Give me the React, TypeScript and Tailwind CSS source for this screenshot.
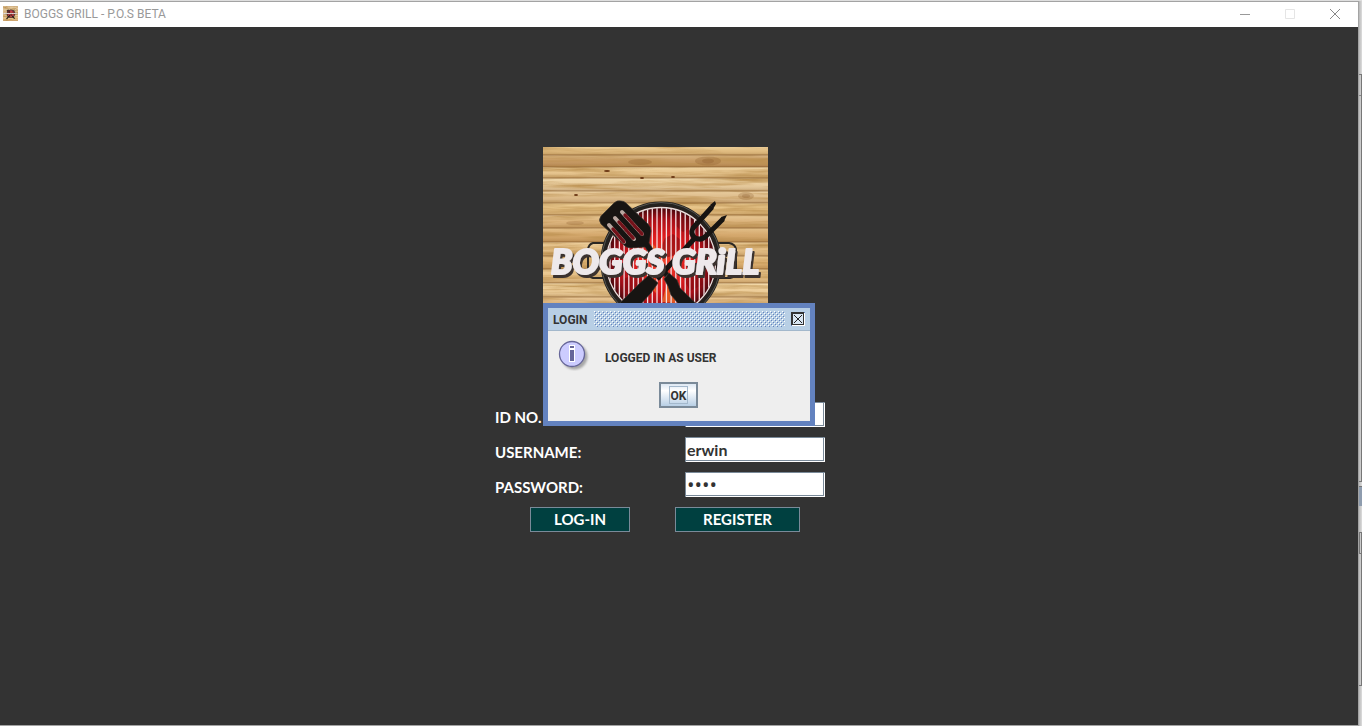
import React, { useState } from "react";

const planks = [
  { y: 0, h: 8, c: "#ddb678" },
  { y: 8, h: 12, c: "#c09058" },
  { y: 20, h: 11, c: "#e4c088" },
  { y: 31, h: 13, c: "#e6c99b" },
  { y: 44, h: 12, c: "#dab684" },
  { y: 56, h: 12, c: "#e2bb7c" },
  { y: 68, h: 13, c: "#d8ad74" },
  { y: 81, h: 14, c: "#d0a062" },
  { y: 95, h: 14, c: "#e2ba80" },
  { y: 109, h: 13, c: "#d8a866" },
  { y: 122, h: 14, c: "#e4bc80" },
  { y: 136, h: 14, c: "#eccb96" },
  { y: 150, h: 14, c: "#d8ab74" },
  { y: 164, h: 61, c: "#e0b67c" },
];

const bars = Array.from({ length: 23 }, (_, i) => 67 + i * 4.7);

function Logo({ id, className }: { id: string; className: string }) {
  return (
    <svg viewBox="0 0 225 225" className={className} role="img" aria-label="Boggs Grill logo">
      <defs>
        <linearGradient id={id + "plank"} x1="0" y1="0" x2="0" y2="1">
          <stop offset="0" stopColor="#fff0c8" stopOpacity=".4" />
          <stop offset=".5" stopColor="#fff0c8" stopOpacity=".1" />
          <stop offset="1" stopColor="#6b3f14" stopOpacity=".25" />
        </linearGradient>
        <radialGradient id={id + "fire"}>
          <stop offset="0" stopColor="#f0452c" />
          <stop offset=".5" stopColor="#dd1a1c" />
          <stop offset=".8" stopColor="#a80f18" />
          <stop offset="1" stopColor="#4c080e" />
        </radialGradient>
        <filter id={id + "grain"} x="0" y="0" width="100%" height="100%">
          <feTurbulence type="fractalNoise" baseFrequency="0.012 0.2" numOctaves="4" seed="21" />
          <feColorMatrix values="0 0 0 0 .5  0 0 0 0 .28  0 0 0 0 .08  2.2 0 0 0 -.9" />
        </filter>
        <filter id={id + "drop"} x="-5%" y="-20%" width="112%" height="150%">
          <feDropShadow dx="2" dy="3" stdDeviation="0.4" floodColor="#3b302d" />
        </filter>
        <clipPath id={id + "bowl"}>
          <circle cx="118" cy="115" r="54" />
        </clipPath>
      </defs>
      {planks.map((p) => (
        <g key={p.y}>
          <rect x="0" y={p.y} width="225" height={p.h} fill={p.c} />
          <rect x="0" y={p.y} width="225" height={p.h} fill={`url(#${id}plank)`} />
        </g>
      ))}
      <rect width="225" height="225" filter={`url(#${id}grain)`} />
      {planks.slice(1).map((p) => (
        <path key={p.y} d={`M0 ${p.y}H225`} stroke="#7a4f24" strokeOpacity=".7" strokeWidth=".8" />
      ))}
      <g fill="#7a4a1c" fillOpacity=".22">
        <ellipse cx="165" cy="14" rx="13" ry="4.5" />
        <ellipse cx="165" cy="14" rx="6" ry="2.5" />
        <ellipse cx="97" cy="15" rx="12" ry="3" />
        <ellipse cx="203" cy="49" rx="8" ry="4" />
        <ellipse cx="203" cy="49" rx="4" ry="2" />
        <ellipse cx="32" cy="76" rx="9" ry="2" />
      </g>
      <g fill="#6b3815">
        <ellipse cx="64" cy="24" rx="3" ry="1" />
        <ellipse cx="99" cy="31" rx="2" ry="1" />
        <ellipse cx="130" cy="30" rx="2" ry="1" />
        <ellipse cx="33" cy="48" rx="2" ry="1" />
      </g>
      <g fill="none" stroke="#2b2723" strokeWidth="2">
        <path d="M61 96H50q-4 1-5 6v24q1 4 5 5h12" />
        <path d="M175 96h11q6 1 7 6v24q-1 4-6 5h-12" />
      </g>
      <circle cx="118" cy="115" r="58" fill="#30090c" stroke="#24221f" strokeWidth="5" />
      <circle cx="118" cy="115" r="59.5" fill="none" stroke="#565552" strokeWidth="1" />
      <circle cx="118" cy="115" r="54" fill={`url(#${id}fire)`} />
      <g clipPath={`url(#${id}bowl)`}>
        <g fill="#74090e" opacity=".5">
          <path d="M86 72l13-5 8 8-5 12-14-1z" />
          <path d="M122 91l8-4 8 6-2 14-14 4-5-8z" />
          <path d="M135 68l12 2 4 9-11 6-8-7z" />
          <path d="M80 132l13-5 10 8-9 12-12-3z" />
          <path d="M139 129l17-3 5 11-14 7z" />
        </g>
        <g fill="#ee6a27" opacity=".8">
          <path d="M109 96l5 6-1 12-6-5z" />
          <path d="M119 155l5-19 4 9 7-5-3 16z" />
          <path d="M106 139l6-9 1 16z" />
        </g>
        {bars.map((x) => (
          <path key={x} d={`M${x} 55V176`} stroke="#f5dfe2" strokeWidth="1.3" />
        ))}
      </g>
      <circle cx="118" cy="115" r="54.5" fill="none" stroke="#e6dedb" strokeWidth="1.3" />
      <g fill="#171412" stroke="#38332e" strokeWidth=".7" strokeLinejoin="round">
        <path d="M78 54q3 0 5 2l22 21q3 3 3 7l-2 12 20 31-4 3-20-30-14 1q-5 0-8-4L58 77q-3-4 0-8l13-13q3-3 7-2z" />
        <path d="M126 126l8 7 3 8 42 41-12 12-39-46-3-9-4-7z" />
        <path d="M106 128l9 8-7 10-48 52-13-12 49-49z" />
      </g>
      <g fill="none" stroke="#171412" strokeWidth="5">
        <path d="M152 91L114 132" />
        <path d="M169 60L150 81q-3 6 2 10 6 3 11-2L180 72" />
      </g>
      <path d="M167 58l5-4 1 3-3 5zM178 70l6-2-3 6-2 1z" fill="#171412" />
      <g fill="none" stroke="#b9a7a0" strokeWidth="4" strokeLinecap="round">
        <path d="M79 65l20 22M72 71l19 21M66 78l15 17" />
      </g>
      <g fill="none" stroke="#74121a" strokeWidth="3.4" strokeLinecap="round" strokeDasharray="3 1.6">
        <path d="M82 68l17 19M76 75l15 17M70 82l11 13" />
      </g>
      <text x="112" y="127" textAnchor="middle" fontFamily="Lato, sans-serif" fontWeight="900" fontStyle="italic" fontSize="35" strokeLinejoin="round" fill="#eee9eb" stroke="#eee9eb" strokeWidth="2" filter={`url(#${id}drop)`}>
        BOGGS GRiLL
      </text>
    </svg>
  );
}

const fieldClass =
  "h-[25px] w-[140px] border-t border-l border-[#7a8a99] bg-white px-px text-[#333333] shadow-[inset_-1px_-1px_0_#fff,inset_-2px_-2px_0_#7a8a99] outline-none";
const textFieldClass = fieldClass + " pb-0.5 text-base font-bold";
const labelClass = "pt-1.5 text-[15px] leading-[19px] text-white";
const actionClass = "h-[25px] border border-[#7a8a99] bg-[#004040] text-[15px] leading-none font-bold text-white";

function LoginForm() {
  const [idNo, setIdNo] = useState("");
  const [user, setUser] = useState("erwin");
  const [pass, setPass] = useState("abcd");
  return (
    <form className="mx-auto w-[368px] pt-[120px] pr-[38px] font-['Lato',sans-serif] font-bold" onSubmit={(e) => e.preventDefault()}>
      <Logo id="main" className="ml-12 block size-[225px]" />
      <div className="mt-[30px] grid grid-cols-[1fr_140px] gap-y-2.5">
        <label htmlFor="idno" className={labelClass}>ID NO.</label>
        <input id="idno" className={textFieldClass} value={idNo} onChange={(e) => setIdNo(e.target.value)} />
        <label htmlFor="username" className={labelClass}>USERNAME:</label>
        <input id="username" className={textFieldClass} value={user} onChange={(e) => setUser(e.target.value)} />
        <label htmlFor="password" className={labelClass}>PASSWORD:</label>
        <input id="password" type="password" className={fieldClass + " font-['Open_Sans',sans-serif] text-xl font-normal"} value={pass} onChange={(e) => setPass(e.target.value)} />
      </div>
      <div className="mt-2.5 flex gap-[45px] pl-[35px]">
        <button type="submit" className={actionClass + " w-[100px]"}>LOG-IN</button>
        <button type="button" className={actionClass + " w-[125px]"}>REGISTER</button>
      </div>
    </form>
  );
}

function LoginDialog() {
  return (
    <div className="absolute inset-0 flex items-center justify-center pt-0.5">
      <div role="dialog" aria-labelledby="dialog-title" className="w-[272px] border-[5px] border-[#6382bf] bg-[#eeeeee] font-['Roboto',sans-serif] text-xs font-bold text-[#333333]">
        <div className="flex h-[23px] items-center gap-1.5 border-b border-[#a3b8cc] bg-[#b8cfe5] px-[5px]">
          <h2 id="dialog-title" className="pt-0.5">LOGIN</h2>
          <svg className="h-4 min-w-0 flex-1" aria-hidden="true" shapeRendering="crispEdges">
            <defs>
              <pattern id="bumps" width="4" height="4" patternUnits="userSpaceOnUse">
                <path d="M0 0h1v1h-1zM2 2h1v1h-1z" fill="#fff" />
                <path d="M1 1h1v1h-1zM3 3h1v1h-1z" fill="#6382bf" />
              </pattern>
            </defs>
            <rect width="100%" height="100%" fill="url(#bumps)" />
          </svg>
          <button type="button" aria-label="Close" className="size-[14px]">
            <svg viewBox="0 0 14 14" className="block size-[14px]" shapeRendering="crispEdges">
              <path d="M0 0h14v14H0z" fill="#6382bf" />
              <path d="M1 1h13v13H1z" fill="#fff" />
              <path d="M0 0h13v13H0z" fill="#333" />
              <path d="M2 2h10v10H2z" fill="#d9e6f2" />
              <path d="M3 3h1v1h1v1h1v1h2V5h1V4h1V3h1v1h-1v1H9v1H8v2h1v1h1v1h1v1h-1v-1H9V9H8V8H6v1H5v1H4v1H3v-1h1V9h1V8h1V6H5V5H4V4H3z" fill="#222" />
            </svg>
          </button>
        </div>
        <div className="flex h-[47px] items-start gap-[15px] pt-2 pl-2.5">
          <svg viewBox="0 0 32 32" className="size-8" aria-hidden="true">
            <defs>
              <filter id="soft"><feGaussianBlur stdDeviation="1.3" /></filter>
            </defs>
            <circle cx="16.5" cy="17.5" r="13" fill="#777" opacity=".6" filter="url(#soft)" />
            <circle cx="14" cy="15" r="12.5" fill="#ccccff" stroke="#666699" strokeWidth="1.3" />
            <path d="M11 6h6v4h-6zM11 10h6v13h-6z" fill="#fff" />
            <path d="M12 7h4v2h-4zM12 11h4v11h-4z" fill="#666699" />
          </svg>
          <p className="pt-3 leading-[14px]">LOGGED IN AS USER</p>
        </div>
        <div className="flex justify-center pt-1 pr-px pb-[13px]">
          <button type="button" className="h-[26px] w-[39px] border-2 border-[#7a8a99] bg-linear-to-b from-[#dde8f3] via-white via-30% to-[#b8cfe5]">
            <span className="mx-auto flex h-[18px] w-[19px] items-center justify-center border border-[#a3b8cc] pt-0.5">OK</span>
          </button>
        </div>
      </div>
    </div>
  );
}

export default function App() {
  return (
    <div className="flex min-h-screen bg-[#dedede] pt-px">
      <div className="relative flex min-w-0 flex-1 flex-col border-t border-r border-b border-[#a3a3a3] bg-[#333333]">
        <header className="flex h-[25px] items-center bg-white pr-px pb-0.5 font-['Roboto',sans-serif] text-xs text-[#999999]">
          <Logo id="mini" className="ml-[3px] size-[15px]" />
          <h1 className="ml-1.5 flex-1">BOGGS GRILL - P.O.S BETA</h1>
          <button type="button" aria-label="Minimize" className="flex h-6 w-[45px] items-center justify-center">
            <svg viewBox="0 0 10 10" className="size-2.5"><path d="M0 5.5h10" stroke="#999" /></svg>
          </button>
          <button type="button" aria-label="Maximize" disabled className="flex h-6 w-[45px] items-center justify-center">
            <svg viewBox="0 0 10 10" className="size-2.5"><path d="M.5.5h9v9h-9z" fill="none" stroke="#e5e5e5" /></svg>
          </button>
          <button type="button" aria-label="Close window" className="flex h-6 w-[45px] items-center justify-center">
            <svg viewBox="0 0 10 10" className="size-2.5"><path d="M0 0l10 10M10 0L0 10" stroke="#888" /></svg>
          </button>
        </header>
        <main className="flex-1">
          <LoginForm />
        </main>
        <LoginDialog />
      </div>
      <aside className="flex w-[3px] flex-col bg-linear-to-r from-[#b8b8b8] to-[#dddddd]" aria-hidden="true">
        <div className="mt-[73px] h-[408px] border-t border-r border-b border-[#777777]">
          <div className="mt-5 h-px w-0.5 bg-[#888888]" />
        </div>
        <div className="mt-1 h-5 border-t border-[#777777] bg-[#8e9cae]" />
        <div className="mt-[26px] h-[22px] border border-[#777777]" />
        <div className="h-[132px] border-r border-b border-[#777777]" />
      </aside>
    </div>
  );
}
